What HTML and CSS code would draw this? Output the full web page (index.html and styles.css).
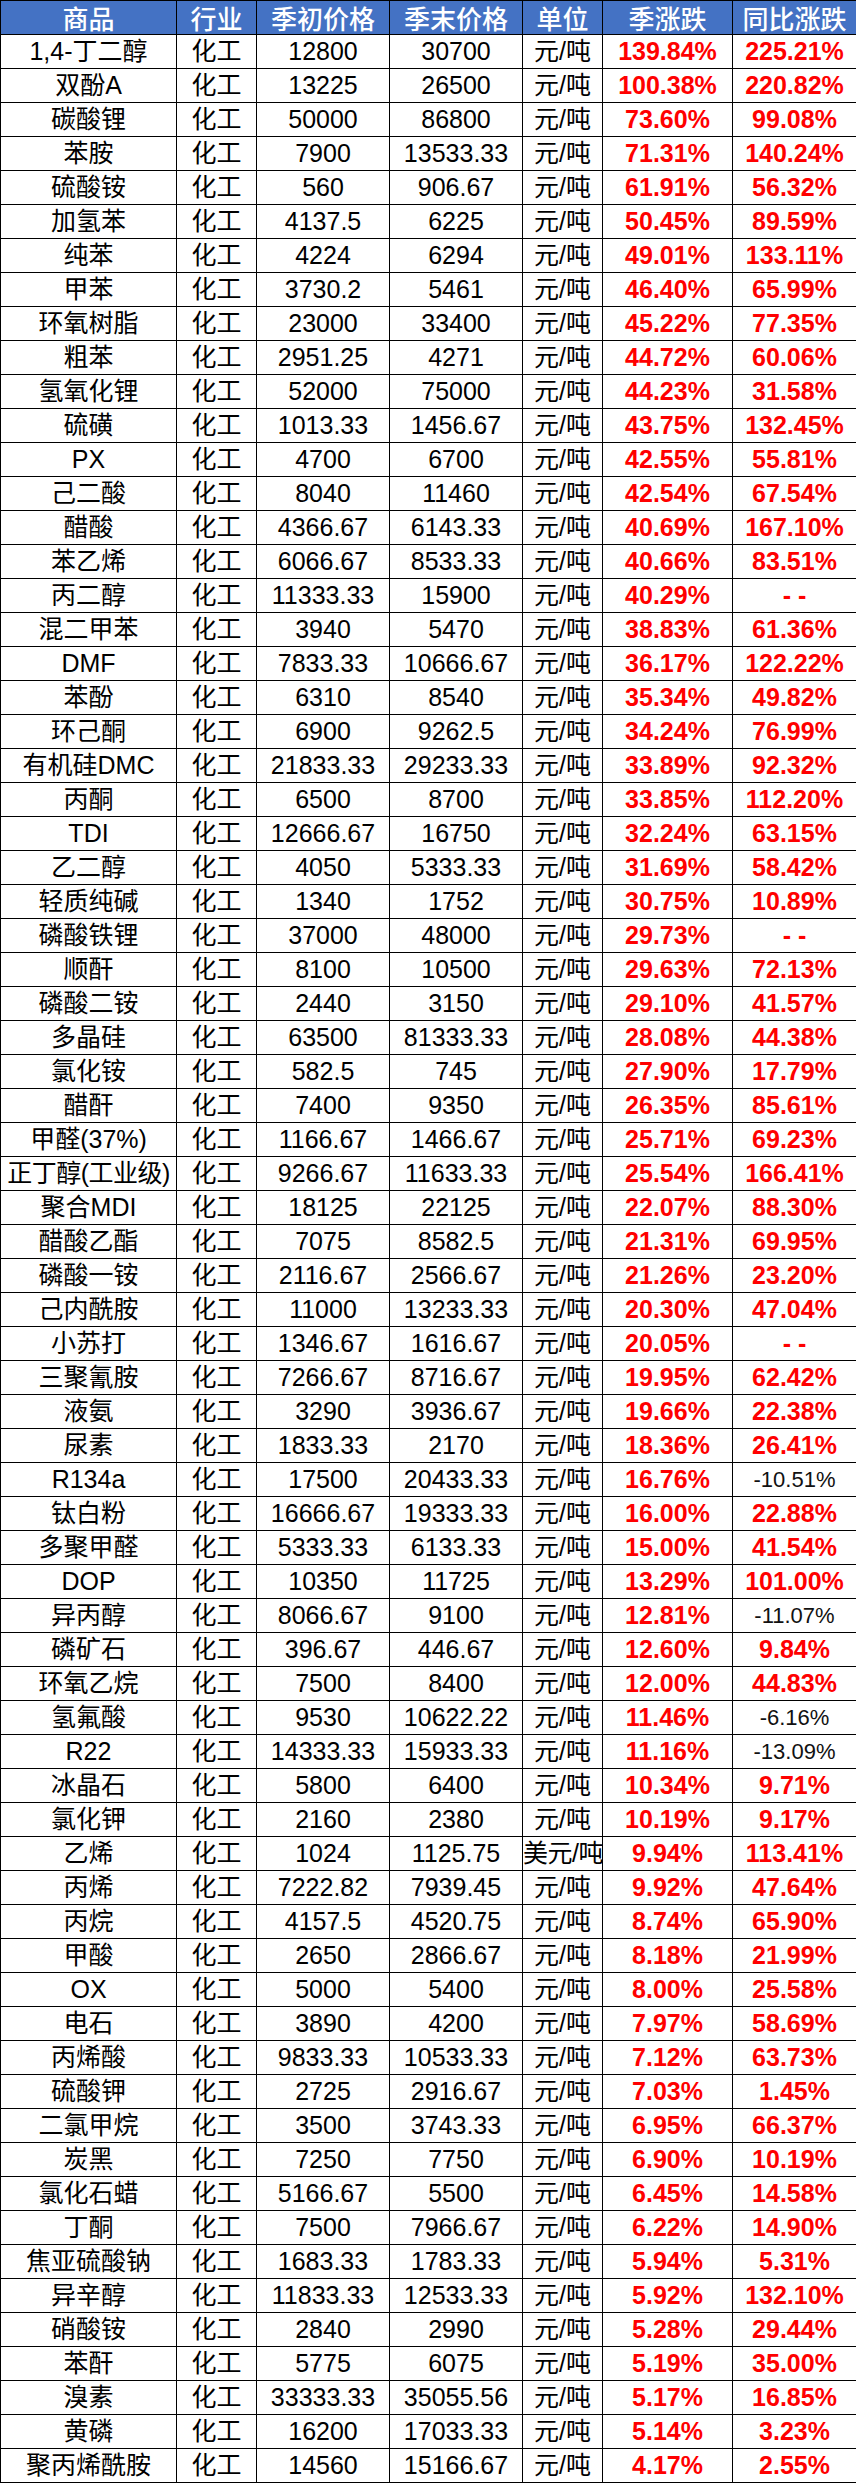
FILE: index.html
```html
<!DOCTYPE html>
<html lang="zh-CN">
<head>
<meta charset="utf-8">
<title>化工品价格涨跌</title>
<link rel="stylesheet" href="styles.css">
</head>
<body>
<table class="grid">
<colgroup>
<col class="c-name"><col class="c-ind"><col class="c-p1"><col class="c-p2"><col class="c-unit"><col class="c-q"><col class="c-y">
</colgroup>
<thead>
<tr><th>商品</th><th>行业</th><th>季初价格</th><th>季末价格</th><th>单位</th><th>季涨跌</th><th>同比涨跌</th></tr>
</thead>
<tbody>
<tr><td>1,4-丁二醇</td><td>化工</td><td>12800</td><td>30700</td><td>元/吨</td><td class="up">139.84%</td><td class="up">225.21%</td></tr>
<tr><td>双酚A</td><td>化工</td><td>13225</td><td>26500</td><td>元/吨</td><td class="up">100.38%</td><td class="up">220.82%</td></tr>
<tr><td>碳酸锂</td><td>化工</td><td>50000</td><td>86800</td><td>元/吨</td><td class="up">73.60%</td><td class="up">99.08%</td></tr>
<tr><td>苯胺</td><td>化工</td><td>7900</td><td>13533.33</td><td>元/吨</td><td class="up">71.31%</td><td class="up">140.24%</td></tr>
<tr><td>硫酸铵</td><td>化工</td><td>560</td><td>906.67</td><td>元/吨</td><td class="up">61.91%</td><td class="up">56.32%</td></tr>
<tr><td>加氢苯</td><td>化工</td><td>4137.5</td><td>6225</td><td>元/吨</td><td class="up">50.45%</td><td class="up">89.59%</td></tr>
<tr><td>纯苯</td><td>化工</td><td>4224</td><td>6294</td><td>元/吨</td><td class="up">49.01%</td><td class="up">133.11%</td></tr>
<tr><td>甲苯</td><td>化工</td><td>3730.2</td><td>5461</td><td>元/吨</td><td class="up">46.40%</td><td class="up">65.99%</td></tr>
<tr><td>环氧树脂</td><td>化工</td><td>23000</td><td>33400</td><td>元/吨</td><td class="up">45.22%</td><td class="up">77.35%</td></tr>
<tr><td>粗苯</td><td>化工</td><td>2951.25</td><td>4271</td><td>元/吨</td><td class="up">44.72%</td><td class="up">60.06%</td></tr>
<tr><td>氢氧化锂</td><td>化工</td><td>52000</td><td>75000</td><td>元/吨</td><td class="up">44.23%</td><td class="up">31.58%</td></tr>
<tr><td>硫磺</td><td>化工</td><td>1013.33</td><td>1456.67</td><td>元/吨</td><td class="up">43.75%</td><td class="up">132.45%</td></tr>
<tr><td>PX</td><td>化工</td><td>4700</td><td>6700</td><td>元/吨</td><td class="up">42.55%</td><td class="up">55.81%</td></tr>
<tr><td>己二酸</td><td>化工</td><td>8040</td><td>11460</td><td>元/吨</td><td class="up">42.54%</td><td class="up">67.54%</td></tr>
<tr><td>醋酸</td><td>化工</td><td>4366.67</td><td>6143.33</td><td>元/吨</td><td class="up">40.69%</td><td class="up">167.10%</td></tr>
<tr><td>苯乙烯</td><td>化工</td><td>6066.67</td><td>8533.33</td><td>元/吨</td><td class="up">40.66%</td><td class="up">83.51%</td></tr>
<tr><td>丙二醇</td><td>化工</td><td>11333.33</td><td>15900</td><td>元/吨</td><td class="up">40.29%</td><td class="up">- -</td></tr>
<tr><td>混二甲苯</td><td>化工</td><td>3940</td><td>5470</td><td>元/吨</td><td class="up">38.83%</td><td class="up">61.36%</td></tr>
<tr><td>DMF</td><td>化工</td><td>7833.33</td><td>10666.67</td><td>元/吨</td><td class="up">36.17%</td><td class="up">122.22%</td></tr>
<tr><td>苯酚</td><td>化工</td><td>6310</td><td>8540</td><td>元/吨</td><td class="up">35.34%</td><td class="up">49.82%</td></tr>
<tr><td>环己酮</td><td>化工</td><td>6900</td><td>9262.5</td><td>元/吨</td><td class="up">34.24%</td><td class="up">76.99%</td></tr>
<tr><td>有机硅DMC</td><td>化工</td><td>21833.33</td><td>29233.33</td><td>元/吨</td><td class="up">33.89%</td><td class="up">92.32%</td></tr>
<tr><td>丙酮</td><td>化工</td><td>6500</td><td>8700</td><td>元/吨</td><td class="up">33.85%</td><td class="up">112.20%</td></tr>
<tr><td>TDI</td><td>化工</td><td>12666.67</td><td>16750</td><td>元/吨</td><td class="up">32.24%</td><td class="up">63.15%</td></tr>
<tr><td>乙二醇</td><td>化工</td><td>4050</td><td>5333.33</td><td>元/吨</td><td class="up">31.69%</td><td class="up">58.42%</td></tr>
<tr><td>轻质纯碱</td><td>化工</td><td>1340</td><td>1752</td><td>元/吨</td><td class="up">30.75%</td><td class="up">10.89%</td></tr>
<tr><td>磷酸铁锂</td><td>化工</td><td>37000</td><td>48000</td><td>元/吨</td><td class="up">29.73%</td><td class="up">- -</td></tr>
<tr><td>顺酐</td><td>化工</td><td>8100</td><td>10500</td><td>元/吨</td><td class="up">29.63%</td><td class="up">72.13%</td></tr>
<tr><td>磷酸二铵</td><td>化工</td><td>2440</td><td>3150</td><td>元/吨</td><td class="up">29.10%</td><td class="up">41.57%</td></tr>
<tr><td>多晶硅</td><td>化工</td><td>63500</td><td>81333.33</td><td>元/吨</td><td class="up">28.08%</td><td class="up">44.38%</td></tr>
<tr><td>氯化铵</td><td>化工</td><td>582.5</td><td>745</td><td>元/吨</td><td class="up">27.90%</td><td class="up">17.79%</td></tr>
<tr><td>醋酐</td><td>化工</td><td>7400</td><td>9350</td><td>元/吨</td><td class="up">26.35%</td><td class="up">85.61%</td></tr>
<tr><td>甲醛(37%)</td><td>化工</td><td>1166.67</td><td>1466.67</td><td>元/吨</td><td class="up">25.71%</td><td class="up">69.23%</td></tr>
<tr><td class="tight">正丁醇(工业级)</td><td>化工</td><td>9266.67</td><td>11633.33</td><td>元/吨</td><td class="up">25.54%</td><td class="up">166.41%</td></tr>
<tr><td>聚合MDI</td><td>化工</td><td>18125</td><td>22125</td><td>元/吨</td><td class="up">22.07%</td><td class="up">88.30%</td></tr>
<tr><td>醋酸乙酯</td><td>化工</td><td>7075</td><td>8582.5</td><td>元/吨</td><td class="up">21.31%</td><td class="up">69.95%</td></tr>
<tr><td>磷酸一铵</td><td>化工</td><td>2116.67</td><td>2566.67</td><td>元/吨</td><td class="up">21.26%</td><td class="up">23.20%</td></tr>
<tr><td>己内酰胺</td><td>化工</td><td>11000</td><td>13233.33</td><td>元/吨</td><td class="up">20.30%</td><td class="up">47.04%</td></tr>
<tr><td>小苏打</td><td>化工</td><td>1346.67</td><td>1616.67</td><td>元/吨</td><td class="up">20.05%</td><td class="up">- -</td></tr>
<tr><td>三聚氰胺</td><td>化工</td><td>7266.67</td><td>8716.67</td><td>元/吨</td><td class="up">19.95%</td><td class="up">62.42%</td></tr>
<tr><td>液氨</td><td>化工</td><td>3290</td><td>3936.67</td><td>元/吨</td><td class="up">19.66%</td><td class="up">22.38%</td></tr>
<tr><td>尿素</td><td>化工</td><td>1833.33</td><td>2170</td><td>元/吨</td><td class="up">18.36%</td><td class="up">26.41%</td></tr>
<tr><td>R134a</td><td>化工</td><td>17500</td><td>20433.33</td><td>元/吨</td><td class="up">16.76%</td><td class="dn">-10.51%</td></tr>
<tr><td>钛白粉</td><td>化工</td><td>16666.67</td><td>19333.33</td><td>元/吨</td><td class="up">16.00%</td><td class="up">22.88%</td></tr>
<tr><td>多聚甲醛</td><td>化工</td><td>5333.33</td><td>6133.33</td><td>元/吨</td><td class="up">15.00%</td><td class="up">41.54%</td></tr>
<tr><td>DOP</td><td>化工</td><td>10350</td><td>11725</td><td>元/吨</td><td class="up">13.29%</td><td class="up">101.00%</td></tr>
<tr><td>异丙醇</td><td>化工</td><td>8066.67</td><td>9100</td><td>元/吨</td><td class="up">12.81%</td><td class="dn">-11.07%</td></tr>
<tr><td>磷矿石</td><td>化工</td><td>396.67</td><td>446.67</td><td>元/吨</td><td class="up">12.60%</td><td class="up">9.84%</td></tr>
<tr><td>环氧乙烷</td><td>化工</td><td>7500</td><td>8400</td><td>元/吨</td><td class="up">12.00%</td><td class="up">44.83%</td></tr>
<tr><td>氢氟酸</td><td>化工</td><td>9530</td><td>10622.22</td><td>元/吨</td><td class="up">11.46%</td><td class="dn">-6.16%</td></tr>
<tr><td>R22</td><td>化工</td><td>14333.33</td><td>15933.33</td><td>元/吨</td><td class="up">11.16%</td><td class="dn">-13.09%</td></tr>
<tr><td>冰晶石</td><td>化工</td><td>5800</td><td>6400</td><td>元/吨</td><td class="up">10.34%</td><td class="up">9.71%</td></tr>
<tr><td>氯化钾</td><td>化工</td><td>2160</td><td>2380</td><td>元/吨</td><td class="up">10.19%</td><td class="up">9.17%</td></tr>
<tr><td>乙烯</td><td>化工</td><td>1024</td><td>1125.75</td><td class="tight">美元/吨</td><td class="up">9.94%</td><td class="up">113.41%</td></tr>
<tr><td>丙烯</td><td>化工</td><td>7222.82</td><td>7939.45</td><td>元/吨</td><td class="up">9.92%</td><td class="up">47.64%</td></tr>
<tr><td>丙烷</td><td>化工</td><td>4157.5</td><td>4520.75</td><td>元/吨</td><td class="up">8.74%</td><td class="up">65.90%</td></tr>
<tr><td>甲酸</td><td>化工</td><td>2650</td><td>2866.67</td><td>元/吨</td><td class="up">8.18%</td><td class="up">21.99%</td></tr>
<tr><td>OX</td><td>化工</td><td>5000</td><td>5400</td><td>元/吨</td><td class="up">8.00%</td><td class="up">25.58%</td></tr>
<tr><td>电石</td><td>化工</td><td>3890</td><td>4200</td><td>元/吨</td><td class="up">7.97%</td><td class="up">58.69%</td></tr>
<tr><td>丙烯酸</td><td>化工</td><td>9833.33</td><td>10533.33</td><td>元/吨</td><td class="up">7.12%</td><td class="up">63.73%</td></tr>
<tr><td>硫酸钾</td><td>化工</td><td>2725</td><td>2916.67</td><td>元/吨</td><td class="up">7.03%</td><td class="up">1.45%</td></tr>
<tr><td>二氯甲烷</td><td>化工</td><td>3500</td><td>3743.33</td><td>元/吨</td><td class="up">6.95%</td><td class="up">66.37%</td></tr>
<tr><td>炭黑</td><td>化工</td><td>7250</td><td>7750</td><td>元/吨</td><td class="up">6.90%</td><td class="up">10.19%</td></tr>
<tr><td>氯化石蜡</td><td>化工</td><td>5166.67</td><td>5500</td><td>元/吨</td><td class="up">6.45%</td><td class="up">14.58%</td></tr>
<tr><td>丁酮</td><td>化工</td><td>7500</td><td>7966.67</td><td>元/吨</td><td class="up">6.22%</td><td class="up">14.90%</td></tr>
<tr><td>焦亚硫酸钠</td><td>化工</td><td>1683.33</td><td>1783.33</td><td>元/吨</td><td class="up">5.94%</td><td class="up">5.31%</td></tr>
<tr><td>异辛醇</td><td>化工</td><td>11833.33</td><td>12533.33</td><td>元/吨</td><td class="up">5.92%</td><td class="up">132.10%</td></tr>
<tr><td>硝酸铵</td><td>化工</td><td>2840</td><td>2990</td><td>元/吨</td><td class="up">5.28%</td><td class="up">29.44%</td></tr>
<tr><td>苯酐</td><td>化工</td><td>5775</td><td>6075</td><td>元/吨</td><td class="up">5.19%</td><td class="up">35.00%</td></tr>
<tr><td>溴素</td><td>化工</td><td>33333.33</td><td>35055.56</td><td>元/吨</td><td class="up">5.17%</td><td class="up">16.85%</td></tr>
<tr><td>黄磷</td><td>化工</td><td>16200</td><td>17033.33</td><td>元/吨</td><td class="up">5.14%</td><td class="up">3.23%</td></tr>
<tr><td>聚丙烯酰胺</td><td>化工</td><td>14560</td><td>15166.67</td><td>元/吨</td><td class="up">4.17%</td><td class="up">2.55%</td></tr>
</tbody>
</table>
</body>
</html>
```
FILE: styles.css
```css
html, body {
  margin: 0;
  padding: 0;
  background: #ffffff;
}

.grid {
  border-collapse: collapse;
  table-layout: fixed;
  width: 856px;
  font-family: "Liberation Sans", "Noto Sans CJK SC", sans-serif;
  color: #000000;
}

.c-name { width: 176px; }
.c-ind  { width: 80px; }
.c-p1   { width: 133px; }
.c-p2   { width: 133px; }
.c-unit { width: 80px; }
.c-q    { width: 130px; }
.c-y    { width: 124px; }

.grid th,
.grid td {
  border: 1px solid #000000;
  padding: 0;
  height: 33px;
  text-align: center;
  vertical-align: middle;
  white-space: nowrap;
  line-height: 33px;
}

.grid th {
  background: #4472c4;
  color: #ffffff;
  font-family: "Noto Sans CJK SC", sans-serif;
  font-weight: 500;
  font-size: 26px;
}

.grid td {
  font-size: 25px;
  font-weight: normal;
}

.grid td.tight {
  letter-spacing: -0.5px;
}

.grid td.up {
  color: #ff0000;
  font-weight: bold;
  font-size: 25px;
}

.grid td.dn {
  color: #111111;
  font-size: 22px;
}
```
